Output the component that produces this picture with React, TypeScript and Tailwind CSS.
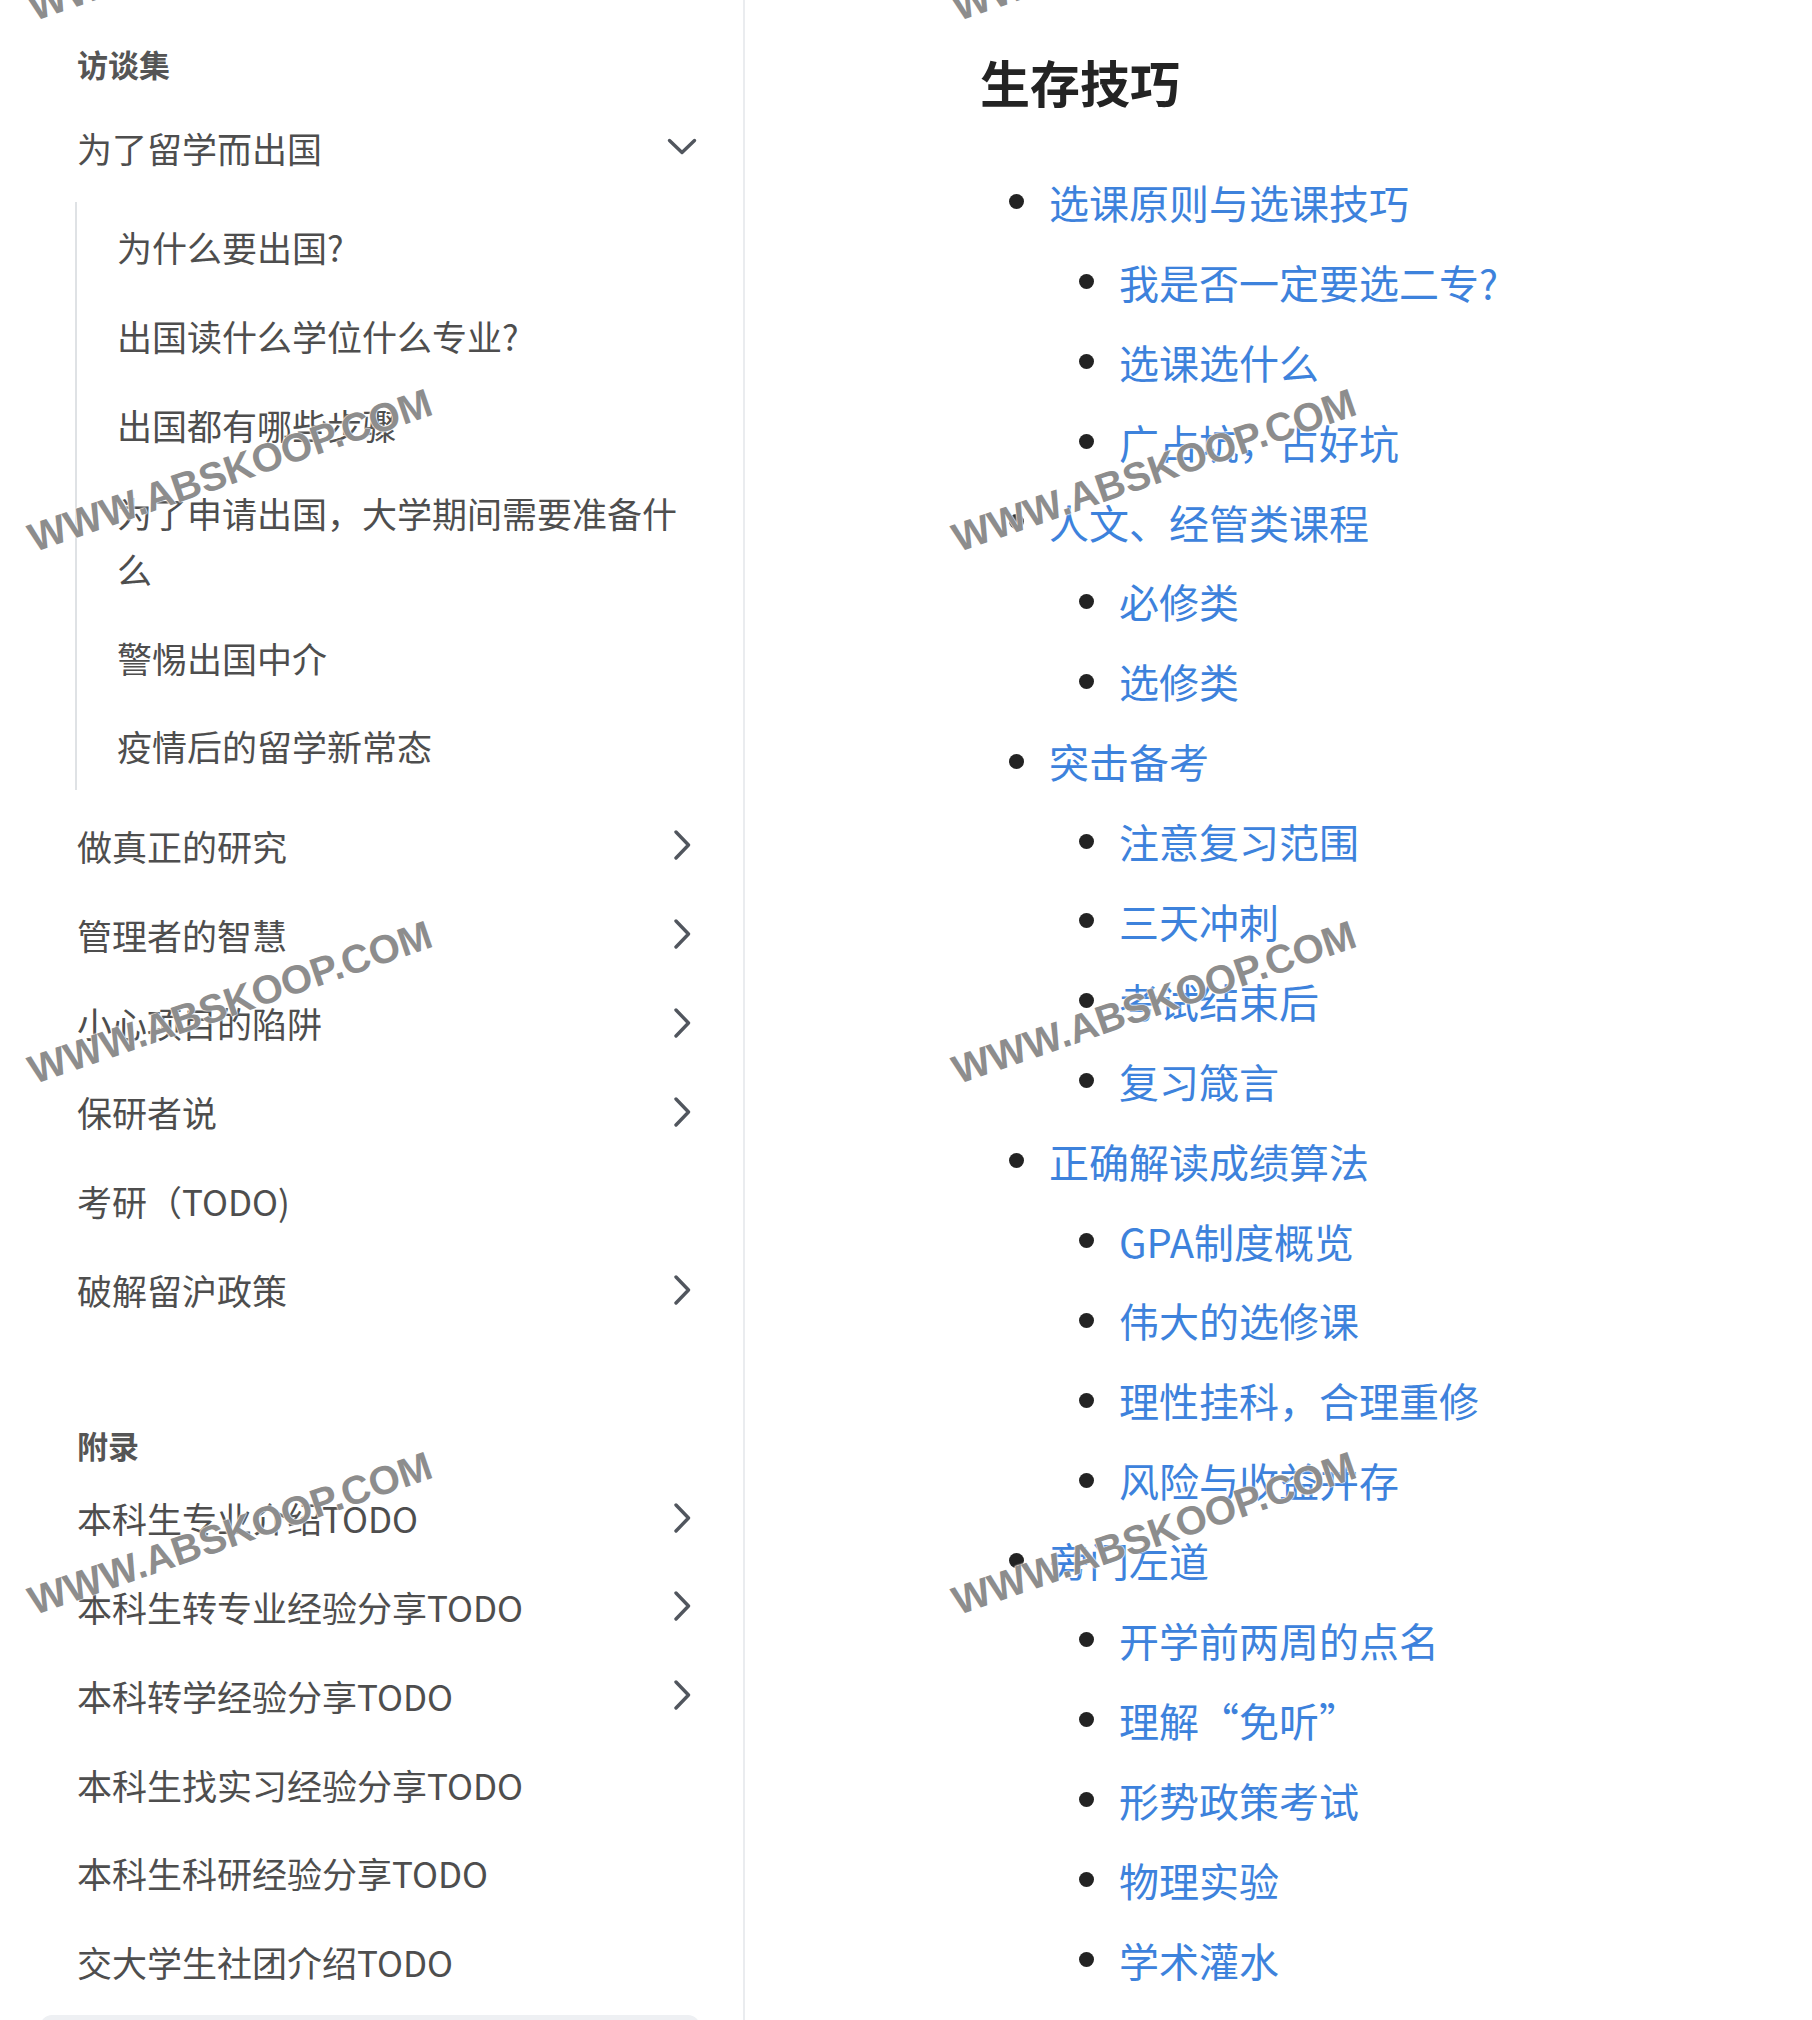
import React from "react";

function ChevronDown() {
  return (
    <svg width="30" height="30" viewBox="0 0 30 30" fill="none">
      <path d="M2.5 8.5 L15 20.5 L27.5 8.5" stroke="#51565e" strokeWidth="3.4" strokeLinecap="round" strokeLinejoin="round" />
    </svg>
  );
}

function ChevronRight() {
  return (
    <svg width="30" height="30" viewBox="0 0 30 30" fill="none">
      <path d="M9 2 L21.5 15 L9 28" stroke="#51565e" strokeWidth="3.4" strokeLinecap="round" strokeLinejoin="round" />
    </svg>
  );
}

type Arrow = "down" | "right" | "none";

function Row({ text, arrow = "none" }: { text: string; arrow?: Arrow }) {
  return (
    <div className="flex items-center justify-between pl-[77px] pr-[46px] py-[16.85px] leading-[55.2px] text-[35px] text-[#4e4e4e]">
      <span>{text}</span>
      {arrow === "down" && <ChevronDown />}
      {arrow === "right" && <ChevronRight />}
    </div>
  );
}

function SubRow({ text }: { text: string }) {
  return (
    <div className="pr-[49px] py-[16.85px] leading-[55.2px] text-[35px] text-[#4e4e4e]">{text}</div>
  );
}

type Item = { text: string; level: 0 | 1 };

const items: Item[] = [
  { text: "选课原则与选课技巧", level: 0 },
  { text: "我是否一定要选二专?", level: 1 },
  { text: "选课选什么", level: 1 },
  { text: "广占坑，占好坑", level: 1 },
  { text: "人文、经管类课程", level: 0 },
  { text: "必修类", level: 1 },
  { text: "选修类", level: 1 },
  { text: "突击备考", level: 0 },
  { text: "注意复习范围", level: 1 },
  { text: "三天冲刺", level: 1 },
  { text: "考试结束后", level: 1 },
  { text: "复习箴言", level: 1 },
  { text: "正确解读成绩算法", level: 0 },
  { text: "GPA制度概览", level: 1 },
  { text: "伟大的选修课", level: 1 },
  { text: "理性挂科，合理重修", level: 1 },
  { text: "风险与收益并存", level: 1 },
  { text: "旁门左道", level: 0 },
  { text: "开学前两周的点名", level: 1 },
  { text: "理解“免听”", level: 1 },
  { text: "形势政策考试", level: 1 },
  { text: "物理实验", level: 1 },
  { text: "学术灌水", level: 1 },
];

function Watermark({ pos }: { pos: string }) {
  return (
    <div
      className={`absolute ${pos} -translate-x-1/2 -translate-y-1/2 rotate-[-19deg] whitespace-nowrap font-['Liberation_Sans',Arial,sans-serif] font-bold text-[40px] leading-none text-[#8d8d8d] [text-shadow:0_0_2px_#ffffff,0_0_2px_#ffffff,0_0_1px_#ffffff] pointer-events-none`}
    >
      WWW.ABSKOOP.COM
    </div>
  );
}

export default function App() {
  return (
    <div className="relative w-[1812px] h-[2020px] overflow-hidden bg-white font-['Noto_Sans_CJK_SC','Noto_Sans',sans-serif]">
      <div className="flex h-full">
        {/* Sidebar */}
        <div className="w-[745px] shrink-0 h-full border-r-2 border-[#eaecef]">
          <div className="pt-[36px]">
            <div className="pl-[77px] h-[55px] leading-[55px] text-[31px] font-bold text-[#555555]">访谈集</div>
            <div className="mt-[11.75px]">
              <Row text="为了留学而出国" arrow="down" />
              <div className="ml-[75px] my-[10.3px] border-l-2 border-[#dfe2e5] pl-[40px]">
                <SubRow text="为什么要出国?" />
                <SubRow text="出国读什么学位什么专业?" />
                <SubRow text="出国都有哪些步骤" />
                <SubRow text="为了申请出国，大学期间需要准备什么" />
                <SubRow text="警惕出国中介" />
                <SubRow text="疫情后的留学新常态" />
              </div>
              <Row text="做真正的研究" arrow="right" />
              <Row text="管理者的智慧" arrow="right" />
              <Row text="小心项目的陷阱" arrow="right" />
              <Row text="保研者说" arrow="right" />
              <Row text="考研（TODO)" />
              <Row text="破解留沪政策" arrow="right" />
            </div>
            <div className="mt-[82.5px] pl-[77px] h-[55px] leading-[55px] text-[31px] font-bold text-[#555555]">附录</div>
            <div className="mt-[1.45px]">
              <Row text="本科生专业介绍TODO" arrow="right" />
              <Row text="本科生转专业经验分享TODO" arrow="right" />
              <Row text="本科转学经验分享TODO" arrow="right" />
              <Row text="本科生找实习经验分享TODO" />
              <Row text="本科生科研经验分享TODO" />
              <Row text="交大学生社团介绍TODO" />
            </div>
            <div className="mt-[8.5px] ml-[40px] w-[660px] h-[60px] rounded-[12px] bg-[#eef0f3]" />
          </div>
        </div>

        {/* Content */}
        <div className="flex-1 min-w-0">
          <h1 className="pt-[51px] pl-[235px] text-[50px] leading-[61px] font-bold text-[#232323]">生存技巧</h1>
          <ul className="mt-[50px]">
            {items.map((it, i) => (
              <li
                key={i}
                className={`flex items-center h-[79.9px] ${it.level === 0 ? "pl-[263.5px]" : "pl-[333.5px]"}`}
              >
                <span className="w-[15px] h-[15px] rounded-full bg-[#232323] shrink-0" />
                <span className="ml-[25.5px] text-[40px] leading-none text-[#3d82dc] whitespace-nowrap">{it.text}</span>
              </li>
            ))}
          </ul>
        </div>
      </div>

      {/* Watermarks */}
      <Watermark pos="left-[230px] top-[-61px]" />
      <Watermark pos="left-[230px] top-[470px]" />
      <Watermark pos="left-[230px] top-[1002px]" />
      <Watermark pos="left-[230px] top-[1533px]" />
      <Watermark pos="left-[1154px] top-[-61px]" />
      <Watermark pos="left-[1154px] top-[470px]" />
      <Watermark pos="left-[1154px] top-[1002px]" />
      <Watermark pos="left-[1154px] top-[1533px]" />
    </div>
  );
}
